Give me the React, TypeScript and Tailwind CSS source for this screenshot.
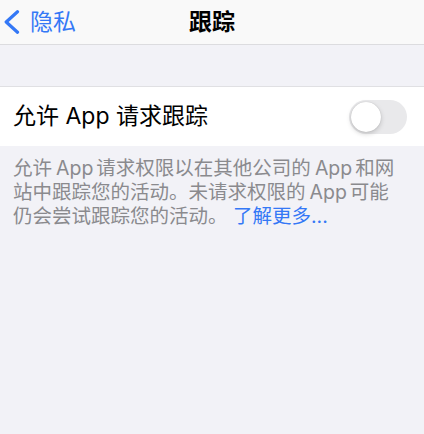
import React from "react";

const font = {
  fontFamily: 'Inter, "Noto Sans CJK SC", "Noto Sans", sans-serif',
};

function BackChevron() {
  return (
    <svg width="17" height="24" viewBox="0 0 17 24" fill="none">
      <path
        d="M14.5 1.8 L3.2 12 L14.5 22.2"
        stroke="#3478f6"
        strokeWidth="3.2"
        strokeLinecap="round"
        strokeLinejoin="round"
      />
    </svg>
  );
}

function Toggle() {
  return (
    <div className="relative h-[34px] w-[58px] rounded-full bg-[#e9e9eb]">
      <div className="absolute left-[2px] top-[2px] h-[30px] w-[30px] rounded-full bg-white shadow-[0_2px_5px_rgba(0,0,0,0.18),0_0_1px_rgba(0,0,0,0.2)]" />
    </div>
  );
}

function Latin({ children }: { children: React.ReactNode }) {
  return <span className="ml-[4px] mr-[3px]">{children}</span>;
}

export default function App() {
  return (
    <div className="h-[434px] w-[424px] bg-[#f2f2f7] overflow-hidden" style={font}>
      <div className="relative flex h-[45px] items-center border-b border-[#dcdcdf] bg-[#f9f9f9]">
        <div className="flex items-center pl-[3px]">
          <BackChevron />
          <span className="ml-[10px] text-[23px] leading-none text-[#3478f6]">隐私</span>
        </div>
        <div className="absolute inset-x-0 flex justify-center pointer-events-none">
          <span className="text-[23px] font-bold leading-none text-black">跟踪</span>
        </div>
      </div>

      <div className="h-[41px]" />

      <div className="flex h-[60px] items-center justify-between border-t border-[#e0e0e3] bg-white pl-[13px] pr-[17px]">
        <span className="text-[23px] text-black">允许 App 请求跟踪</span>
        <Toggle />
      </div>

      <div className="px-[13px] pt-[10px] text-[19.5px] leading-[24px] text-[#8a8a8e] whitespace-nowrap">
        <div>
          允许<Latin>App</Latin>请求权限以在其他公司的<Latin>App</Latin>和网
        </div>
        <div>
          站中跟踪您的活动。未请求权限的<Latin>App</Latin>可能
        </div>
        <div>
          仍会尝试跟踪您的活动。 <span className="text-[#3478f6]">了解更多...</span>
        </div>
      </div>
    </div>
  );
}
